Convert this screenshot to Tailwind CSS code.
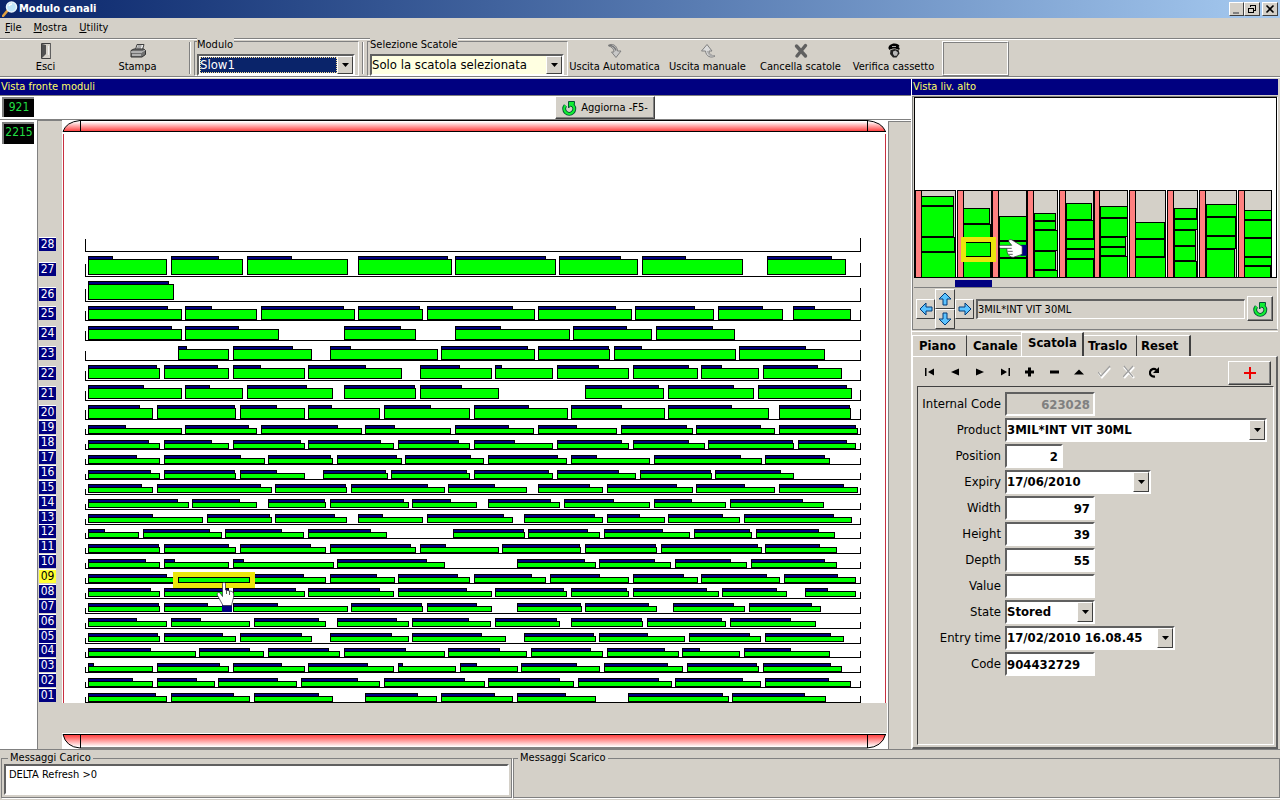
<!DOCTYPE html>
<html lang="it">
<head>
<meta charset="utf-8">
<meta name="viewport" content="width=device-width, initial-scale=1">
<title>Modulo canali</title>
<script src="https://cdn.jsdelivr.net/npm/@tailwindcss/browser@4"></script>
</head>
<body class="min-h-screen flex flex-col bg-[#d4d0c8] text-black text-[11px] leading-[14px] font-['DejaVu_Sans_Condensed','Liberation_Sans',sans-serif]">

<!-- Title bar -->
<header class="h-[18px] shrink-0 flex items-center pl-0.5 pr-0.5 bg-linear-to-r from-[#0a246a] to-[#a6caf0]">
    <svg class="size-4" viewBox="0 0 16 16">
        <path d="M1 15l5-6" stroke="#e0a040" stroke-width="2.6" stroke-linecap="round"/>
        <circle cx="9.500" cy="6" r="5" fill="#bfe6fa" stroke="#e8f4fc" stroke-width="1.500"/>
        <path d="M7 5a3 3 0 0 1 3-2" stroke="#fff" stroke-width="1.500" fill="none"/>
    </svg>
    <h1 class="flex-1 pl-px font-bold text-white text-[11px]">Modulo canali</h1>
    <button aria-label="Minimize" class="w-[15px] h-[14px] bg-[#d4d0c8] border border-t-white border-l-white border-r-[#404040] border-b-[#404040]"><svg class="block w-[13px] h-3" viewBox="0 0 13 12"><path d="M3 9h6v2H3z" fill="#808080"/></svg></button>
    <button aria-label="Restore" class="w-4 h-[14px] bg-[#d4d0c8] border border-t-white border-l-white border-r-[#404040] border-b-[#404040]"><svg class="block w-[14px] h-3" viewBox="0 0 14 12" shape-rendering="crispEdges"><path d="M5.500 4V2.500h5v5H8M5 2h6M3.500 5.500h5v4h-5zM3 5h6" fill="none" stroke="#000"/></svg></button>
    <button aria-label="Close" class="w-4 h-[14px] ml-0.5 bg-[#d4d0c8] border border-t-white border-l-white border-r-[#404040] border-b-[#404040]"><svg class="block w-[14px] h-3" viewBox="0 0 14 12"><path d="M3.500 2.500l7 7M10.500 2.500l-7 7" stroke="#000" stroke-width="1.600"/></svg></button>
</header>

<!-- Menu -->
<nav class="h-[21px] shrink-0 flex items-center gap-3 px-[5px] text-[11px] border-b border-[#808080]">
    <a href="#"><u>F</u>ile</a>
    <a href="#"><u>M</u>ostra</a>
    <a href="#"><u>U</u>tility</a>
</nav>

<!-- Toolbar -->
<div class="h-[38px] shrink-0 flex border-t border-t-white border-b border-b-[#808080]">
    <button class="w-[91px] flex flex-col items-center pt-[3px] gap-px">
        <svg class="size-4" viewBox="0 0 16 16"><path d="M3.500.500h9v15h-9z" fill="#d4d0c8" stroke="#404040"/><path d="M4 1l4 1v9l-4 4z" fill="#505050"/><path d="M10 3h1v9h-1z" fill="#f0f0f0"/><path d="M12.500 1v15" stroke="#606060"/></svg>
        Esci
    </button>
    <button class="w-[93px] flex flex-col items-center pt-[3px] gap-px">
        <svg class="size-4" viewBox="0 0 16 16"><path d="M5.500 6.500L7 1.500h7l-1.500 5z" fill="#f4f4f4" stroke="#404040"/><path d="M7.500 3h4M7 5h4" stroke="#606060"/><path d="M1 7.500L4 6h10l1.500 1.500v4L12 14H1z" fill="#707070" stroke="#303030"/><path d="M1 9h11M2 12h9" stroke="#eee"/><path d="M12 9l3-2" stroke="#bbb"/></svg>
        Stampa
    </button>
    <div class="w-px ml-[5px] my-0.5 bg-[#808080]"></div>
    <div class="w-px my-0.5 bg-white"></div>
    <div class="w-[165px] ml-[3px] mt-px border border-[#808080] border-r-white border-b-white px-0.5">
        <label for="modulo" class="block h-3 leading-[10px]"><span class="relative -top-0.5 bg-[#d4d0c8] pr-px">Modulo</span></label>
        <div class="relative w-[158px] h-[22px] border-2 border-[#606060] border-r-white border-b-white bg-white p-px">
            <select id="modulo" class="block w-[137px] h-4 appearance-none bg-[#0a246a] text-white text-[13px] leading-4 outline outline-dotted outline-1 -outline-offset-1 outline-[#f5db95]"><option>Slow1</option></select>
            <span class="absolute right-0 top-0 w-4 h-[18px] pointer-events-none bg-[#d4d0c8] border border-t-white border-l-white border-r-[#404040] border-b-[#404040] flex items-center justify-center"><svg class="w-[7px] h-1" viewBox="0 0 7 4"><path d="M0 0h7L3.500 4z"/></svg></span>
        </div>
    </div>
    <div class="w-px ml-[3px] my-0.5 bg-[#808080]"></div>
    <div class="w-px my-0.5 bg-white"></div>
    <div class="w-[201px] ml-[3px] mt-px border border-[#808080] border-r-white border-b-white px-0.5">
        <label for="scatole" class="block h-3 leading-[10px]"><span class="relative -top-0.5 bg-[#d4d0c8] pr-px">Selezione Scatole</span></label>
        <div class="relative w-[194px] h-[22px] border-2 border-[#606060] border-r-white border-b-white bg-[#ffffe1]">
            <select id="scatole" class="block w-[174px] h-[18px] appearance-none text-[13px] leading-4"><option>Solo la scatola selezionata</option></select>
            <span class="absolute right-0 top-0 w-4 h-[18px] pointer-events-none bg-[#d4d0c8] border border-t-white border-l-white border-r-[#404040] border-b-[#404040] flex items-center justify-center"><svg class="w-[7px] h-1" viewBox="0 0 7 4"><path d="M0 0h7L3.500 4z"/></svg></span>
        </div>
    </div>
    <button class="w-[93px] flex flex-col items-center pt-[3px] gap-px whitespace-nowrap">
        <svg class="size-4" viewBox="0 0 16 16"><path d="M1 2.500C5 0 10 2 10.500 8H14l-5 6.500L4.500 9H7C7 6 5 4 1 2.500z" fill="#c8c8c8" stroke="#808080"/><path d="M2 2.500c4 0 6 2 7 5" stroke="#777" fill="none" stroke-width="1.500"/></svg>
        Uscita Automatica
    </button>
    <button class="w-[93px] flex flex-col items-center pt-[3px] gap-px whitespace-nowrap">
        <svg class="size-4" viewBox="0 0 16 16"><path d="M15 13c-4 2.500-9 .500-9.500-5H1.500l5.500-6.500L12 8H9c0 3 2 4.500 6 5z" fill="#dcdcdc" stroke="#808080"/><path d="M7.500 8c1 3 3 5 6 5" stroke="#aaa" fill="none" stroke-width="1.500"/></svg>
        Uscita manuale
    </button>
    <button class="w-[93px] flex flex-col items-center pt-[3px] gap-px whitespace-nowrap">
        <svg class="size-4" viewBox="0 0 16 16"><path d="M3.500 3l9 10M12.500 2.500L4 13" stroke="#606060" stroke-width="3.400" stroke-linecap="round"/></svg>
        Cancella scatole
    </button>
    <button class="w-[93px] flex flex-col items-center pt-[3px] gap-px whitespace-nowrap">
        <svg class="size-4" viewBox="0 0 16 16"><path d="M2.500 5.500C2 3 5 .500 8.500.500c2.500 0 4.500 1 5 2.500l-1 1C14 5 14 6 13 7 10 5 6 5 3.500 7z"/><path d="M6 3.500h4" stroke="#aaa"/><path d="M4.500 7l4-1 4 1 1 3.500-3 4H7L4 11z" fill="#222"/><path d="M7 8.500l2.500-1 2.500 2-1 3-2.500.500L7 11z" fill="#b8b8b8"/></svg>
        Verifica cassetto
    </button>
    <div class="w-[67px] h-[35px] ml-0.5 mt-px border border-white border-r-[#808080] border-b-[#808080]"><div class="h-full border border-[#808080] border-r-white border-b-white"></div></div>
</div>

<main class="flex-1 flex border-t border-white pt-px">

    <!-- Front view -->
    <section class="flex-1 min-w-0 flex flex-col border-r border-white">
        <h2 class="h-4 bg-[#000080] text-[#ffff66] leading-[15px] pl-px">Vista fronte moduli</h2>
        <div class="h-[25px] border-t border-b border-[#808080] bg-white flex">
            <div class="w-8 h-5 ml-0.5 mt-px bg-black border-t-2 border-l-2 border-[#808080] text-[#22dd44] text-[12px] leading-4 text-center">921</div>
            <div class="flex-1 flex justify-center pl-[264px]">
                <button class="w-[100px] h-[23px] flex items-center justify-center gap-1 bg-[#d4d0c8] border border-t-white border-l-white border-r-[#404040] border-b-[#404040] shadow-[inset_-1px_-1px_0_#808080] whitespace-nowrap">
                    <svg class="size-4" viewBox="0 0 16 16"><path d="M4.500 5.500a5 5 0 1 0 7.500 0" fill="none" stroke="#053" stroke-width="4"/><path d="M7.500 1.500h6v1.500l-1 4.500-3-1.500-2 2z" fill="#1e3" stroke="#053"/><path d="M4.500 5.500a5 5 0 1 0 7.500 0" fill="none" stroke="#1e3" stroke-width="2.200"/></svg>
                    Aggiorna -F5-
                </button>
            </div>
        </div>
        <div class="flex-1 flex bg-white">
            <div class="w-9 pl-0.5 pt-0.5">
                <div class="w-8 h-[22px] bg-black border-t-2 border-l-2 border-[#808080] text-[#22dd44] text-[12px] leading-4 text-center">2215</div>
            </div>
            <ol id="levels" class="w-[25px] ml-px bg-[#d4d0c8] border-l border-t border-[#808080] pl-px pt-[115px] flex flex-col"></ol>
            <div class="flex-1 min-w-0">
                <svg id="shelves" class="block w-full h-[629px]" viewBox="62 120 825 629" preserveAspectRatio="xMidYMin meet" shape-rendering="crispEdges">
                    <defs>
                        <linearGradient id="down" x1="0" y1="0" x2="0" y2="1"><stop offset="0.1" stop-color="#fff"/><stop offset="1" stop-color="#ff3838"/></linearGradient>
                        <linearGradient id="up" x1="0" y1="1" x2="0" y2="0"><stop offset="0.1" stop-color="#fff"/><stop offset="1" stop-color="#ff3838"/></linearGradient>
                    </defs>
                    <path d="M63 131.500Q66 122 80 120.500H867Q882 122 885.500 131.500z" fill="url(#down)" stroke="#000" shape-rendering="auto"/>
                    <path d="M80.500 120v12M867.500 120v12M63 131.500h823" stroke="#000"/>
                    <path d="M63 134h1v569h-1zM885 134h1v569h-1z" fill="#c83040"/>
                    <path d="M62 703h825v30H62z" fill="#d4d0c8"/>
                    <path d="M63 734.500H885.500Q882 747 867 748H80Q66 747 63 734.500z" fill="url(#up)" stroke="#000" shape-rendering="auto"/>
                    <path d="M80.500 734v14M867.500 734v14M63 734.500h823" stroke="#000"/>
                    <g id="rows"></g>
                    <!-- selected box -->
                    <rect x="175.500" y="574.500" width="77" height="11" fill="none" stroke="#ebe60c" stroke-width="5"/>
                    <rect x="178.500" y="577.500" width="71" height="5" fill="#0f0" stroke="#000"/>
                    <g shape-rendering="auto">
                        <path d="M222 605h10v7h-10z" fill="#000080"/>
                        <path d="M222.500 584c0-2 3-2 3 0v6l6.500 1.500c2 1 2 3 1.500 6l-2 8H223l-5.500-10c-1-3 1-4 3-2l2 3z" fill="#fff" stroke="#223" stroke-width=".7"/>
                        <path d="M226.500 590v4M229.500 591v4" stroke="#333" stroke-width=".8"/>
                    </g>
                </svg>
            </div>
            <div class="w-[23px] ml-px mt-px bg-[#d4d0c8] border-l border-t border-[#808080]"></div>
        </div>
    </section>

    <!-- Right column -->
    <aside class="w-[368px] shrink-0 flex flex-col pr-0.5">
        <h2 class="h-4 bg-[#000080] text-[#ffff66] leading-[15px] pl-px">Vista liv. alto</h2>
        <div class="mt-px border border-[#808080] border-r-white pl-px h-[234px] flex flex-col">
            <svg id="topview" class="block w-full h-[190px]" viewBox="914 97 364 190" shape-rendering="crispEdges">
                <path d="M914 97h364v181H914z" fill="#fff"/>
                <path d="M914 278h364v9H914z" fill="#d4d0c8"/>
                <g id="channels"></g>
                <path d="M914.500 278V97.500h363V278M914 277.500h363" fill="none" stroke="#000"/>
                <path d="M955 280h37v7h-37z" fill="#000080"/>
                <rect x="963.500" y="239.500" width="30" height="20" fill="none" stroke="#ebe60c" stroke-width="5"/>
                <g shape-rendering="auto">
                    <path d="M1021 245h6v11h-6z" fill="#000080"/>
                    <path d="M1001 245.500c-2 0-2 3 0 3h6l.500 4c1 3 3 5 6 5l9-3v-8L1012 240c-3-1-4 1-2 3l2 2.500z" fill="#fff" stroke="#223" stroke-width=".7"/>
                    <path d="M1007 248.500h5M1008 251.500h5M1009 254.500h4" stroke="#333" stroke-width=".8"/>
                </g>
            </svg>
            <div class="h-[42px] border-t border-[#808080] flex items-center pl-0.5 pr-1">
                <button aria-label="Sinistra" class="w-[19px] h-5 border border-t-white border-l-white border-r-[#404040] border-b-[#404040] flex items-center justify-center"><svg class="size-3.5" viewBox="0 0 14 14"><path d="M1 7l6-6v4h6v4H7v4z" fill="#5cc3ff" stroke="#003a78"/></svg></button>
                <div class="flex flex-col">
                    <button aria-label="Su" class="w-5 h-5 border border-t-white border-l-white border-r-[#404040] border-b-[#404040] flex items-center justify-center"><svg class="size-3.5" viewBox="0 0 14 14"><path d="M7 1l6 6H9v6H5V7H1z" fill="#5cc3ff" stroke="#003a78"/></svg></button>
                    <button aria-label="Giu" class="w-5 h-5 border border-t-white border-l-white border-r-[#404040] border-b-[#404040] flex items-center justify-center"><svg class="size-3.5" viewBox="0 0 14 14"><path d="M7 13l6-6H9V1H5v6H1z" fill="#5cc3ff" stroke="#003a78"/></svg></button>
                </div>
                <button aria-label="Destra" class="w-[19px] h-5 border border-t-white border-l-white border-r-[#404040] border-b-[#404040] flex items-center justify-center"><svg class="size-3.5" viewBox="0 0 14 14"><path d="M13 7L7 1v4H1v4h6v4z" fill="#5cc3ff" stroke="#003a78"/></svg></button>
                <input aria-label="Prodotto" readonly value="3MIL*INT VIT 30ML" class="flex-1 min-w-0 h-5 ml-0.5 mr-0.5 bg-[#d4d0c8] border-t-2 border-l-2 border-r border-b border-t-[#606060] border-l-[#606060] border-r-white border-b-white">
                <button aria-label="Aggiorna" class="w-[26px] h-[25px] border border-t-white border-l-white border-r-[#404040] border-b-[#404040] shadow-[inset_-1px_-1px_0_#808080] flex items-center justify-center">
                    <svg class="size-4" viewBox="0 0 16 16"><path d="M4.500 5.500a5 5 0 1 0 7.500 0" fill="none" stroke="#053" stroke-width="4"/><path d="M7.500 1.500h6v1.500l-1 4.500-3-1.500-2 2z" fill="#1e3" stroke="#053"/><path d="M4.500 5.500a5 5 0 1 0 7.500 0" fill="none" stroke="#1e3" stroke-width="2.200"/></svg>
                </button>
            </div>
        </div>

        <!-- Tabs -->
        <div class="h-[25px] mt-px border-t border-white flex items-end font-bold text-[13px] leading-4">
            <button class="w-[55px] h-[21px] text-left pl-1.5 border-t border-l border-white border-r border-r-[#404040]">Piano</button>
            <button class="w-[54px] h-[21px] text-left pl-1.5 border-t border-white">Canale</button>
            <button class="w-[63px] h-6 pb-1 text-left pl-1.5 border-t border-l border-white border-r-2 border-r-[#404040]">Scatola</button>
            <button class="w-[53px] h-[21px] text-left pl-1 border-t border-white border-r border-r-[#404040]">Traslo</button>
            <button class="w-[54px] h-[21px] text-left pl-1 border-t border-white border-r-2 border-r-[#404040]">Reset</button>
        </div>
        <div class="flex-1 flex flex-col border-t border-l border-white border-r-2 border-r-[#606060] border-b-2 border-b-[#606060] pl-1 pr-0.5 pb-0.5">
            <div class="h-[29px] flex items-center">
                <button aria-label="Primo" class="w-[25px] flex justify-center"><svg class="size-3" viewBox="0 0 12 12"><path d="M1 2h1.500v8H1zM10 2.500v7L4 6z"/></svg></button>
                <button aria-label="Precedente" class="w-[25px] flex justify-center"><svg class="size-3" viewBox="0 0 12 12"><path d="M10 2.500v7L2 6z"/></svg></button>
                <button aria-label="Successivo" class="w-[25px] flex justify-center"><svg class="size-3" viewBox="0 0 12 12"><path d="M2 2.500v7L10 6z"/></svg></button>
                <button aria-label="Ultimo" class="w-[25px] flex justify-center"><svg class="size-3" viewBox="0 0 12 12"><path d="M9.500 2H11v8H9.500zM2 2.500v7L8 6z"/></svg></button>
                <button aria-label="Inserisci" class="w-[25px] flex justify-center"><svg class="size-3" viewBox="0 0 12 12"><path d="M1 4.500h3v-3h3v3h3v3H7v3H4v-3H1z"/></svg></button>
                <button aria-label="Elimina" class="w-[25px] flex justify-center"><svg class="size-3" viewBox="0 0 12 12"><path d="M1 4.500h9v3H1z"/></svg></button>
                <button aria-label="Modifica" class="w-[25px] flex justify-center"><svg class="size-3" viewBox="0 0 12 12"><path d="M0 8.500h10L5 3.500z"/></svg></button>
                <button aria-label="Conferma" class="w-[25px] flex justify-center"><svg class="size-[14px]" viewBox="0 0 14 14"><path d="M1 8l3 4 8-9" fill="none" stroke="#fff" stroke-width="2.500"/><path d="M0 7l3 4 9-10" fill="none" stroke="#a0a0a0" stroke-width="1.200"/></svg></button>
                <button aria-label="Annulla" class="w-[25px] flex justify-center"><svg class="size-[14px]" viewBox="0 0 14 14"><path d="M1 2l10 11M11 2L1 13" stroke="#fff" stroke-width="2.500"/><path d="M1 1l9 11M10 1L0 12" stroke="#a0a0a0" stroke-width="1.200"/></svg></button>
                <button aria-label="Ricarica" class="w-[25px] flex justify-center"><svg class="size-3" viewBox="0 0 12 12"><path d="M6 10.500C2 11 .500 8 1 6c.500-3 4-4 6.500-2" fill="none" stroke="#000" stroke-width="2.200"/><path d="M10 1v6H4z"/></svg></button>
                <button aria-label="Aggiungi" class="w-[43px] h-6 ml-auto mr-[3px] mt-0.5 border border-t-white border-l-white border-r-[#404040] border-b-[#404040] shadow-[inset_-1px_-1px_0_#808080] flex items-center justify-center"><svg class="size-3" viewBox="0 0 12 12"><path d="M5 0h2v5h5v2H7v5H5V7H0V5h5z" fill="#e00"/></svg></button>
            </div>
            <form class="flex-1 border-t border-l border-[#404040] border-r border-r-white border-b border-b-white pt-[5px] pr-1.5 grid grid-cols-[83px_1fr] auto-rows-[24px] gap-x-1 gap-y-0.5 items-center text-[13px] leading-4 content-start">
                <label for="internal" class="text-right whitespace-nowrap">Internal Code</label>
                <input id="internal" disabled value="623028" class="w-[90px] h-6 pr-[3px] text-right font-bold text-[#808080] bg-[#d4d0c8] border-2 border-[#606060] border-r-white border-b-white">
                <label for="product" class="text-right">Product</label>
                <div class="relative w-full h-6 border-2 border-[#606060] border-r-white border-b-white bg-white">
                    <select id="product" class="block w-full h-5 appearance-none font-bold"><option>3MIL*INT VIT 30ML</option></select>
                    <span class="absolute right-0 top-0 w-4 h-5 pointer-events-none bg-[#d4d0c8] border border-t-white border-l-white border-r-[#404040] border-b-[#404040] flex items-center justify-center"><svg class="w-[7px] h-1" viewBox="0 0 7 4"><path d="M0 0h7L3.500 4z"/></svg></span>
                </div>
                <label for="position" class="text-right">Position</label>
                <input id="position" value="2" class="w-[58px] h-6 pr-[3px] text-right font-bold bg-white border-2 border-[#606060] border-r-white border-b-white">
                <label for="expiry" class="text-right">Expiry</label>
                <div class="relative w-[146px] h-6 border-2 border-[#606060] border-r-white border-b-white bg-white">
                    <select id="expiry" class="block w-full h-5 appearance-none font-bold"><option>17/06/2010</option></select>
                    <span class="absolute right-0 top-0 w-4 h-5 pointer-events-none bg-[#d4d0c8] border border-t-white border-l-white border-r-[#404040] border-b-[#404040] flex items-center justify-center"><svg class="w-[7px] h-1" viewBox="0 0 7 4"><path d="M0 0h7L3.500 4z"/></svg></span>
                </div>
                <label for="width" class="text-right">Width</label>
                <input id="width" value="97" class="w-[90px] h-6 pr-[3px] text-right font-bold bg-white border-2 border-[#606060] border-r-white border-b-white">
                <label for="height" class="text-right">Height</label>
                <input id="height" value="39" class="w-[90px] h-6 pr-[3px] text-right font-bold bg-white border-2 border-[#606060] border-r-white border-b-white">
                <label for="depth" class="text-right">Depth</label>
                <input id="depth" value="55" class="w-[90px] h-6 pr-[3px] text-right font-bold bg-white border-2 border-[#606060] border-r-white border-b-white">
                <label for="value" class="text-right">Value</label>
                <input id="value" class="w-[90px] h-6 pr-[3px] text-right font-bold bg-white border-2 border-[#606060] border-r-white border-b-white">
                <label for="state" class="text-right">State</label>
                <div class="relative w-[90px] h-6 border-2 border-[#606060] border-r-white border-b-white bg-white">
                    <select id="state" class="block w-full h-5 appearance-none font-bold"><option>Stored</option></select>
                    <span class="absolute right-0 top-0 w-4 h-5 pointer-events-none bg-[#d4d0c8] border border-t-white border-l-white border-r-[#404040] border-b-[#404040] flex items-center justify-center"><svg class="w-[7px] h-1" viewBox="0 0 7 4"><path d="M0 0h7L3.500 4z"/></svg></span>
                </div>
                <label for="entry" class="text-right">Entry time</label>
                <div class="relative w-[170px] h-6 border-2 border-[#606060] border-r-white border-b-white bg-white">
                    <select id="entry" class="block w-full h-5 appearance-none font-bold"><option>17/02/2010 16.08.45</option></select>
                    <span class="absolute right-0 top-0 w-4 h-5 pointer-events-none bg-[#d4d0c8] border border-t-white border-l-white border-r-[#404040] border-b-[#404040] flex items-center justify-center"><svg class="w-[7px] h-1" viewBox="0 0 7 4"><path d="M0 0h7L3.500 4z"/></svg></span>
                </div>
                <label for="code" class="text-right">Code</label>
                <input id="code" value="904432729" class="w-[90px] h-6 font-bold bg-white border-2 border-[#606060] border-r-white border-b-white">
            </form>
        </div>
    </aside>
</main>

<!-- Messages -->
<footer class="h-[51px] shrink-0 flex border-t border-[#808080] pt-0.5 pb-0.5">
    <fieldset class="w-[511px] ml-px border border-[#808080] shadow-[1px_1px_0_#fff] px-0.5">
        <legend class="ml-1 px-0.5 leading-3">Messaggi Carico</legend>
        <textarea aria-label="Messaggi Carico" readonly class="block w-full h-[31px] resize-none bg-white border-2 border-[#606060] border-r-white border-b-white px-[3px] py-0.5">DELTA Refresh &gt;0</textarea>
    </fieldset>
    <fieldset class="flex-1 ml-px border border-[#808080] shadow-[1px_1px_0_#fff]">
        <legend class="ml-1 px-0.5 leading-3">Messaggi Scarico</legend>
    </fieldset>
</footer>

<script>
// level, shelf line y, top of boxes y, box height, then boxes as [left, right, end of blue strip]
var shelves = [
    ['28', 251, 240, 16, []],
    ['27', 276, 256, 16, [[88,167,113],[171,243,219],[247,348,292],[358,452,448],[455,556,546],[559,638,621],[642,743,686],[767,846,832]]],
    ['26', 301, 281, 16, [[88,174,169]]],
    ['25', 320, 306, 11, [[88,182,168],[185,257,212],[261,355,344],[358,423,420],[427,535,513],[538,632,616],[635,714,695],[718,783,763],[793,851,815]]],
    ['24', 340, 326, 11, [[88,182,172],[185,279,239],[344,416,401],[455,570,501],[573,652,627],[656,735,713]]],
    ['23', 360, 346, 11, [[178,229,187],[233,312,293],[330,438,351],[441,535,528],[538,610,609],[614,736,642],[739,825,806]]],
    ['22', 380, 365, 11, [[88,160,157],[164,229,218],[233,305,261],[308,402,366],[420,492,460],[495,553,502],[557,629,599],[633,698,689],[701,759,722],[763,842,818]]],
    ['21', 400, 385, 11, [[88,182,144],[185,243,210],[247,333,307],[344,416,415],[420,499,462],[585,664,659],[668,754,734],[758,852,847]]],
    ['20', 419, 405, 11, [[88,153,140],[157,236,235],[240,305,277],[308,380,332],[384,470,431],[474,568,529],[571,665,622],[668,769,732],[779,851,850]]],
    ['19', 434, 425, 6, [[88,182,126],[185,257,249],[261,362,338],[365,451,395],[455,534,509],[538,617,577],[621,693,687],[696,775,761],[779,858,856]]],
    ['18', 449, 440, 6, [[88,160,149],[164,229,212],[233,305,301],[308,394,381],[398,470,459],[474,553,515],[557,629,622],[633,705,689],[708,794,793],[798,856,847]]],
    ['17', 464, 455, 6, [[88,160,137],[164,265,241],[268,333,331],[337,402,397],[405,484,471],[488,567,558],[571,650,597],[654,762,741],[765,830,825]]],
    ['16', 479, 470, 6, [[88,160,151],[164,236,235],[240,305,277],[323,388,386],[391,470,467],[474,553,549],[557,636,619],[640,712,711],[715,794,781]]],
    ['15', 494, 484, 6, [[88,153,142],[157,272,261],[275,347,346],[351,445,428],[448,527,495],[538,603,590],[607,693,677],[696,775,745],[779,858,844]]],
    ['14', 509, 499, 6, [[88,189,178],[192,257,240],[268,326,325],[330,409,404],[412,477,451],[488,560,551],[564,650,614],[654,726,692],[730,824,803]]],
    ['13', 524, 514, 6, [[88,203,153],[207,272,270],[275,347,335],[358,423,383],[427,513,504],[524,603,595],[607,665,640],[668,740,723],[744,852,834]]],
    ['12', 538, 529, 6, [[88,139,105],[143,222,210],[225,304,282],[308,387,371],[453,525,524],[528,600,588],[604,690,663],[694,752,750],[756,835,819]]],
    ['11', 553, 544, 6, [[88,160,159],[164,236,229],[240,326,311],[330,416,411],[420,499,446],[502,581,580],[585,657,656],[661,762,758],[765,837,820]]],
    ['10', 568, 559, 6, [[88,160,146],[164,229,175],[233,334,244],[337,445,427],[517,596,585],[599,671,655],[675,747,731],[751,837,825]]],
    ['09', 583, 574, 6, [[88,174,167],[254,326,304],[330,395,377],[398,470,458],[474,546,532],[550,629,600],[633,698,684],[701,780,767],[784,856,838]]],
    ['08', 598, 588, 6, [[88,160,151],[164,229,229],[233,305,296],[308,394,380],[398,492,467],[495,567,564],[571,629,627],[633,719,707],[722,787,777],[805,856,828]]],
    ['07', 613, 603, 6, [[88,160,159],[164,229,208],[233,348,278],[351,423,422],[427,492,477],[517,582,581],[585,657,649],[673,745,734],[749,821,812]]],
    ['06', 628, 618, 6, [[88,167,137],[171,250,201],[254,326,319],[337,409,397],[412,491,469],[495,560,557],[571,643,642],[647,726,722],[730,816,791]]],
    ['05', 643, 633, 6, [[88,160,158],[164,236,223],[240,312,302],[330,409,392],[412,506,482],[524,596,594],[599,685,648],[689,761,750],[765,844,831]]],
    ['04', 657, 648, 6, [[88,196,151],[199,264,250],[268,340,329],[344,445,406],[448,527,500],[531,603,591],[607,679,665],[682,740,700],[744,830,791]]],
    ['03', 672, 663, 6, [[88,153,94],[157,229,220],[233,305,282],[308,394,368],[398,456,403],[460,518,477],[521,600,577],[604,683,668],[687,759,757],[763,842,831]]],
    ['02', 687, 678, 6, [[88,153,133],[157,215,197],[218,297,278],[301,380,358],[384,485,465],[488,574,560],[578,672,659],[675,761,743],[765,851,829]]],
    ['01', 702, 693, 6, [[88,167,156],[171,250,234],[254,333,319],[365,437,418],[441,513,495],[517,596,566],[628,729,723],[732,826,805]]]
];

// channels seen from above: left, right, x of first box, then boxes as [right, top]
var channels = [
    [915, 955, 921, [[953,196],[953,206],[954,237],[955,252]]],
    [957, 991, 963, [[989,208],[990,224],[990,242],[990,257]]],
    [992, 1026, 999, [[1026,216],[1026,241],[1026,258]]],
    [1027, 1057, 1034, [[1055,213],[1055,221],[1057,230],[1055,251],[1057,270]]],
    [1059, 1093, 1066, [[1091,203],[1093,220],[1094,239],[1094,249],[1093,259]]],
    [1094, 1128, 1101, [[1128,206],[1128,218],[1126,237],[1126,247],[1128,256]]],
    [1130, 1166, 1136, [[1165,222],[1165,239],[1166,257]]],
    [1168, 1198, 1175, [[1197,208],[1198,219],[1196,230],[1196,246],[1197,261]]],
    [1200, 1237, 1207, [[1237,204],[1236,217],[1236,236],[1235,249]]],
    [1239, 1272, 1245, [[1272,210],[1272,220],[1272,238],[1272,257],[1271,266]]]
];

function rect(x, y, w, h, fill) {
    return '<rect x="' + (x + 0.5) + '" y="' + (y + 0.5) + '" width="' + (w - 1) + '" height="' + (h - 1) + '" fill="' + fill + '" stroke="#000"/>';
}

var rowsHtml = '';
var levelsHtml = '';
var previous = 237;
shelves.forEach(function (shelf) {
    var line = shelf[1];
    var tick = shelf[3] === 16 ? 13 : shelf[3] === 11 ? 10 : 6;
    rowsHtml += '<path d="M85.5 ' + (line - tick + 1) + 'V' + (line + 0.5) + 'H860.5V' + (line - tick) + '" fill="none" stroke="#000"/>';
    shelf[4].forEach(function (box) {
        rowsHtml += rect(box[0], shelf[2], box[2] - box[0], 4, '#000080');
        rowsHtml += rect(box[0], shelf[2] + 3, box[1] - box[0], shelf[3], '#00ff00');
    });

    // the label sits on the same line as its shelf
    var colours = shelf[0] === '09' ? 'bg-[#ffff33] text-black' : 'bg-[#000080] text-white';
    levelsHtml += '<li class="flex items-end" style="height:' + (line + 1 - previous) + 'px"><span class="w-[17px] h-[14px] border-t border-white text-[12px] leading-[13px] text-center ' + colours + '">' + shelf[0] + '</span></li>';
    previous = line + 1;
});
document.getElementById('rows').innerHTML = rowsHtml;
document.getElementById('levels').innerHTML = levelsHtml;

var channelsHtml = '';
channels.forEach(function (channel) {
    channelsHtml += rect(channel[0], 190, channel[1] - channel[0] + 1, 88, '#d4d0c8');
    channelsHtml += rect(channel[0], 190, 7, 88, '#ff8080');
    channel[3].forEach(function (box, i) {
        var bottom = i + 1 < channel[3].length ? channel[3][i + 1][1] : 278;
        channelsHtml += rect(channel[2], box[1], box[0] - channel[2] + 1, bottom - box[1], '#00ff00');
    });
});
document.getElementById('channels').innerHTML = channelsHtml;
</script>
</body>
</html>
